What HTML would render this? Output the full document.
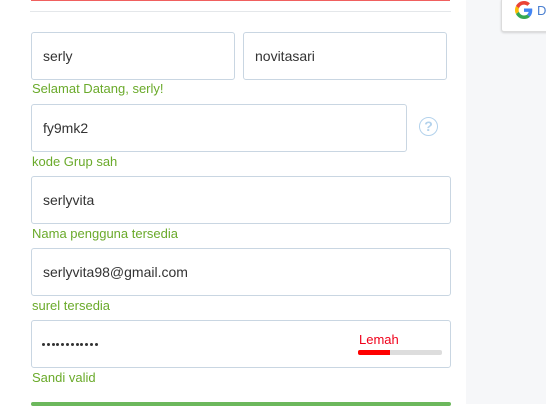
<!DOCTYPE html><html><head><style>
body{margin:0;width:546px;height:404px;overflow:hidden;background:#fff;font-family:"Liberation Sans",Arial,sans-serif;position:relative}
.a{position:absolute}
.in{position:absolute;box-sizing:border-box;border:1px solid #c9d6e2;border-radius:3px;background:#fff;font-size:14px;color:#333;padding-left:11px;display:flex;align-items:center}
.lb{position:absolute;left:32px;font-size:13px;color:#6aaa2a}
.d{display:inline-block;width:3px;height:3px;border-radius:50%;background:#333;margin-right:1.8px}
</style></head><body>
<div class="a" style="left:466px;top:0;width:80px;height:404px;background:#f6f7f9"></div>
<div class="a" style="left:501px;top:-2px;width:50px;height:32px;background:#fff;border:1px solid #dcdcdc;border-radius:3px;box-shadow:0 1px 2px rgba(0,0,0,.15)"></div>
<svg class="a" style="left:515px;top:1px" width="18" height="18" viewBox="0 0 48 48"><path fill="#EA4335" d="M24 9.5c3.5 0 6.6 1.2 9.1 3.6l6.8-6.8C35.8 2.4 30.3 0 24 0 14.6 0 6.6 5.4 2.6 13.3l7.9 6.2C12.4 13.7 17.7 9.5 24 9.5z"/><path fill="#4285F4" d="M46.1 24.5c0-1.6-.1-3.1-.4-4.5H24v9h12.4c-.5 2.9-2.2 5.3-4.6 6.9l7.7 6c4.5-4.2 6.6-10.3 6.6-17.4z"/><path fill="#FBBC05" d="M10.5 28.6c-.5-1.4-.8-3-.8-4.6s.3-3.2.8-4.6l-7.9-6.2C.9 16.5 0 20.1 0 24s.9 7.5 2.6 10.8l7.9-6.2z"/><path fill="#34A853" d="M24 48c6.5 0 11.9-2.1 15.9-5.8l-7.7-6c-2.2 1.5-5 2.3-8.2 2.3-6.3 0-11.6-4.2-13.5-10l-7.9 6.2C6.6 42.6 14.6 48 24 48z"/></svg>
<div class="a" style="left:537px;top:3px;font-size:13px;color:#4a7fd0">D</div>
<div class="a" style="left:31px;top:0;width:419px;height:1px;background:#f0605e"></div>
<div class="a" style="left:30px;top:11px;width:421px;height:1px;background:#e4e7ea"></div>
<div class="in" style="left:31px;top:32px;width:204px;height:48px">serly</div>
<div class="in" style="left:243px;top:32px;width:204px;height:48px">novitasari</div>
<div class="lb" style="top:81px">Selamat Datang, serly!</div>
<div class="in" style="left:31px;top:104px;width:376px;height:48px">fy9mk2</div>
<div class="a" style="left:419px;top:117px;width:19px;height:19px;box-sizing:border-box;border:1.5px solid #b3d2ec;border-radius:50%;color:#b3d2ec;font-size:14px;font-weight:bold;text-align:center;line-height:17px">?</div>
<div class="lb" style="top:154px">kode Grup sah</div>
<div class="in" style="left:31px;top:176px;width:420px;height:48px">serlyvita</div>
<div class="lb" style="top:226px">Nama pengguna tersedia</div>
<div class="in" style="left:31px;top:248px;width:420px;height:48px">serlyvita98@gmail.com</div>
<div class="lb" style="top:298px">surel tersedia</div>
<div class="in" style="left:31px;top:320px;width:420px;height:48px;padding-left:10px"><span class="d"></span><span class="d"></span><span class="d"></span><span class="d"></span><span class="d"></span><span class="d"></span><span class="d"></span><span class="d"></span><span class="d"></span><span class="d"></span><span class="d"></span><span class="d"></span></div>
<div class="a" style="left:359px;top:332px;font-size:13px;color:#f0001a">Lemah</div>
<div class="a" style="left:358px;top:350px;width:84px;height:5px;background:#ddd;border-radius:2px"><div style="width:32px;height:5px;background:#f00;border-radius:2px 0 0 2px"></div></div>
<div class="lb" style="top:370px">Sandi valid</div>
<div class="a" style="left:31px;top:402px;width:420px;height:4px;background:#6cb85c;border-radius:3px"></div>
</body></html>
